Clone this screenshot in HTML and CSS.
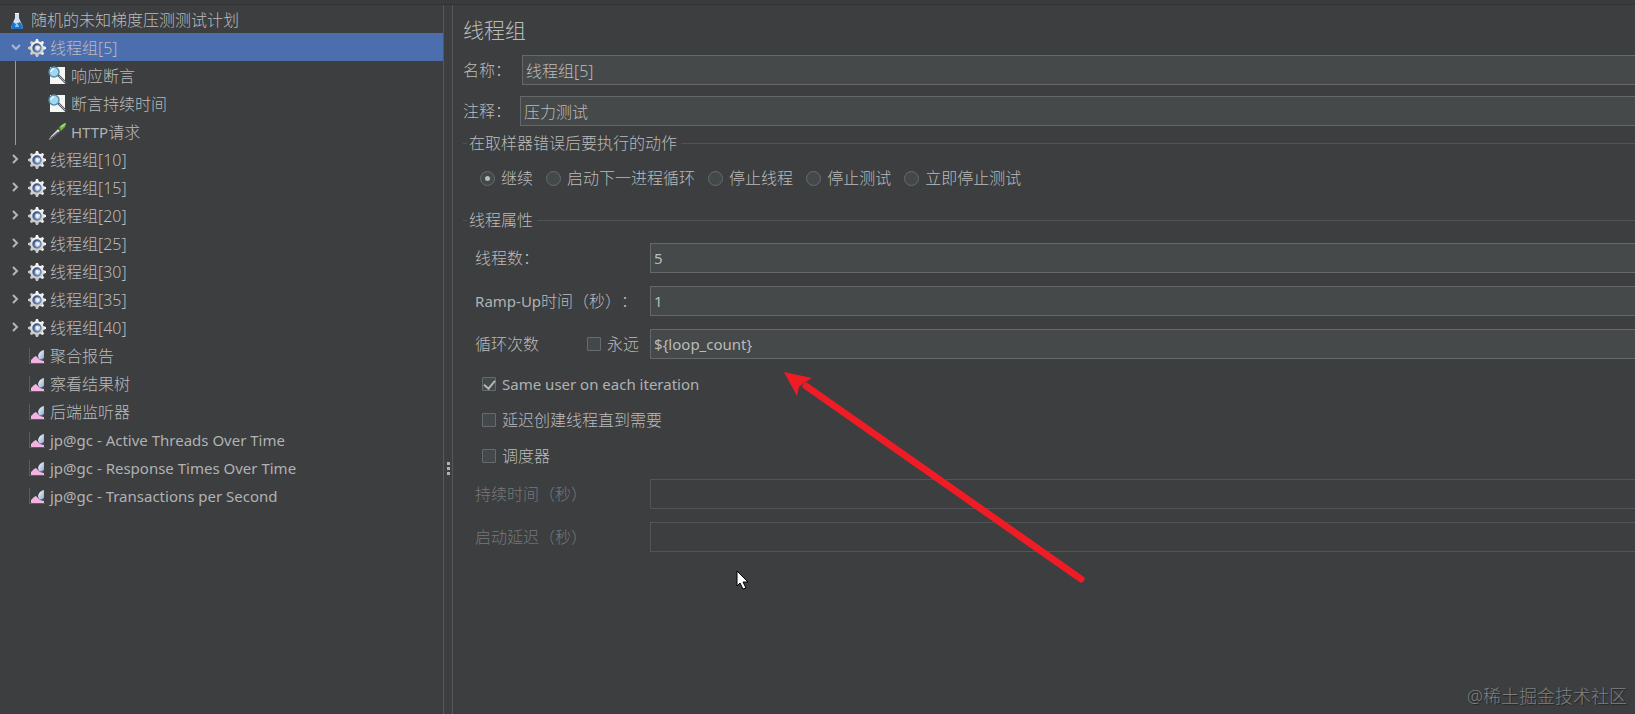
FILE: index.html
```
<!DOCTYPE html>
<html lang="zh-CN">
<head>
<meta charset="utf-8">
<title>线程组</title>
<link rel="stylesheet" href="styles.css">
</head>
<body>
<svg class="defs" aria-hidden="true">
  <defs>
    <linearGradient id="gearFill" x1="0" y1="0" x2="0" y2="1">
      <stop offset="0" stop-color="#f6f6f6"/><stop offset="1" stop-color="#c4c4c2"/>
    </linearGradient>
    <linearGradient id="hub" x1="0" y1="0" x2="1" y2="1">
      <stop offset="0" stop-color="#2c4170"/><stop offset="1" stop-color="#7fa0cc"/>
    </linearGradient>
    <linearGradient id="blob" x1="0" y1="0" x2="1" y2="1">
      <stop offset="0" stop-color="#ffffff"/><stop offset="1" stop-color="#86a4cf"/>
    </linearGradient>
    <symbol id="gear" viewBox="0 0 18 18">
      <g fill="url(#gearFill)">
        <path d="M7 3l1-3h2l1 3v12l-1 3H8l-1-3z"/>
        <path d="M7 3l1-3h2l1 3v12l-1 3H8l-1-3z" transform="rotate(45 9 9)"/>
        <path d="M7 3l1-3h2l1 3v12l-1 3H8l-1-3z" transform="rotate(90 9 9)"/>
        <path d="M7 3l1-3h2l1 3v12l-1 3H8l-1-3z" transform="rotate(135 9 9)"/>
        <circle cx="9" cy="9" r="6.800"/>
      </g>
      <circle cx="9" cy="9" r="4.700" fill="url(#hub)"/>
      <circle cx="9.500" cy="9" r="2.800" fill="#b9c8e4"/>
      <path d="M8 7l4 1-3 4z" fill="#f4f7fb"/>
    </symbol>
    <symbol id="lens" viewBox="0 0 19 19">
      <path d="M2 1h15v17H2z" fill="#f6f6f4"/>
      <path d="M10 9l8 8" stroke="#55585b" stroke-width="2.4"/>
      <path d="M11 10l6 6" stroke="#a9adb0" stroke-width="1"/>
      <circle cx="6" cy="6" r="5" fill="#a6d5ec" stroke="#4b8fb5" stroke-width="1.4"/>
      <path d="M3 6a3 3 0 0 1 3-3" stroke="#e8f7ff" stroke-width="1.4" fill="none"/>
    </symbol>
    <symbol id="pipette" viewBox="0 0 19 19">
      <path d="M1 18l2-4 8-8 2 2-9 8z" fill="#d9dcda" stroke="#74797a" stroke-width=".8"/>
      <path d="M3 16l7-6" stroke="#4c5254" stroke-width="1"/>
      <path d="M9 5l5 5" stroke="#34502a" stroke-width="1.600"/>
      <path d="M11 5l4-3q3-2 3-1t-1 4l-4 4z" fill="#6fae43"/>
      <path d="M13 5l4-3" stroke="#b9e08f" stroke-width="1.4"/>
    </symbol>
    <symbol id="chart" viewBox="0 0 16 16">
      <path d="M.5 0v15.500M0 15.500h16" stroke="#5c5d60" fill="none"/>
      <path d="M2 15v-3l3-3 2-1 3 3 5 2v2z" fill="#f3b2e2"/>
      <path d="M9 8q1-5 6-6v8q-3 3-5 1z" fill="url(#blob)"/>
      <path d="M10 11q3 2 5-1v3l-4-1z" fill="#4b4a78"/>
    </symbol>
    <symbol id="flask" viewBox="0 0 12 17">
      <path d="M4 1h4v5l4 9q0 2-2 2H2q-2 0-2-2l4-9z" fill="#d5e2ee"/>
      <path d="M2 10l3 2 4-2 3 5q0 2-2 2H2q-2 0-2-2z" fill="#1673cf"/>
      <path d="M5 12l-1 3h4l-1-3z" fill="#8dc4f5"/>
      <path d="M4 1h4v1H4z" fill="#fff"/>
    </symbol>
    <symbol id="closed" viewBox="0 0 10 10">
      <path d="M2 1l4 4-4 4" fill="none" stroke="#b4b6b8" stroke-width="2"/>
    </symbol>
    <symbol id="open" viewBox="0 0 10 10">
      <path d="M1 3l4 4 4-4" fill="none" stroke="#a9b7d4" stroke-width="2"/>
    </symbol>
  </defs>
</svg>

<div class="app">
  <nav class="tree" aria-label="测试计划">
    <ul class="tree-list">
      <li class="row row-root"><svg class="icon-flask"><use href="#flask"/></svg><span>随机的未知梯度压测测试计划</span></li>
      <li>
        <div class="row row-group selected"><svg class="arrow"><use href="#open"/></svg><svg class="icon-gear"><use href="#gear"/></svg><span>线程组[5]</span></div>
        <ul class="tree-list children">
          <li class="row"><svg class="icon-child"><use href="#lens"/></svg><span>响应断言</span></li>
          <li class="row"><svg class="icon-child"><use href="#lens"/></svg><span>断言持续时间</span></li>
          <li class="row"><svg class="icon-child"><use href="#pipette"/></svg><span><span class="latin">HTTP</span>请求</span></li>
        </ul>
      </li>
      <li class="row row-group"><svg class="arrow"><use href="#closed"/></svg><svg class="icon-gear"><use href="#gear"/></svg><span>线程组[10]</span></li>
      <li class="row row-group"><svg class="arrow"><use href="#closed"/></svg><svg class="icon-gear"><use href="#gear"/></svg><span>线程组[15]</span></li>
      <li class="row row-group"><svg class="arrow"><use href="#closed"/></svg><svg class="icon-gear"><use href="#gear"/></svg><span>线程组[20]</span></li>
      <li class="row row-group"><svg class="arrow"><use href="#closed"/></svg><svg class="icon-gear"><use href="#gear"/></svg><span>线程组[25]</span></li>
      <li class="row row-group"><svg class="arrow"><use href="#closed"/></svg><svg class="icon-gear"><use href="#gear"/></svg><span>线程组[30]</span></li>
      <li class="row row-group"><svg class="arrow"><use href="#closed"/></svg><svg class="icon-gear"><use href="#gear"/></svg><span>线程组[35]</span></li>
      <li class="row row-group"><svg class="arrow"><use href="#closed"/></svg><svg class="icon-gear"><use href="#gear"/></svg><span>线程组[40]</span></li>
      <li class="row row-report"><svg class="icon-chart"><use href="#chart"/></svg><span>聚合报告</span></li>
      <li class="row row-report"><svg class="icon-chart"><use href="#chart"/></svg><span>察看结果树</span></li>
      <li class="row row-report"><svg class="icon-chart"><use href="#chart"/></svg><span>后端监听器</span></li>
      <li class="row row-report"><svg class="icon-chart"><use href="#chart"/></svg><span class="latin">jp@gc - Active Threads Over Time</span></li>
      <li class="row row-report"><svg class="icon-chart"><use href="#chart"/></svg><span class="latin">jp@gc - Response Times Over Time</span></li>
      <li class="row row-report"><svg class="icon-chart"><use href="#chart"/></svg><span class="latin">jp@gc - Transactions per Second</span></li>
    </ul>
  </nav>

  <div class="splitter"><i></i><i></i><i></i></div>

  <main class="panel">
    <h1 class="title">线程组</h1>
    <div class="line"><label for="name">名称：</label><input class="field" id="name" type="text" value="线程组[5]"></div>
    <div class="line line-comment"><label for="comment">注释：</label><input class="field" id="comment" type="text" value="压力测试"></div>

    <fieldset class="group group-action">
      <legend>在取样器错误后要执行的动作</legend>
      <div class="radios">
        <label class="choice"><input type="radio" name="action" checked>继续</label>
        <label class="choice"><input type="radio" name="action">启动下一进程循环</label>
        <label class="choice"><input type="radio" name="action">停止线程</label>
        <label class="choice"><input type="radio" name="action">停止测试</label>
        <label class="choice"><input type="radio" name="action">立即停止测试</label>
      </div>
    </fieldset>

    <fieldset class="group group-props">
      <legend>线程属性</legend>
      <div class="props">
        <div class="prop"><label class="prop-name" for="threads">线程数：</label><input class="field latin" id="threads" type="text" value="5"></div>
        <div class="prop"><label class="prop-name" for="ramp"><span class="latin">Ramp-Up</span>时间（秒）：</label><input class="field latin" id="ramp" type="text" value="1"></div>
        <div class="prop"><div class="prop-name loop"><label for="loops">循环次数</label><label class="choice"><input type="checkbox">永远</label></div><input class="field latin" id="loops" type="text" value="${loop_count}"></div>
      </div>
      <div class="checks">
        <label class="choice latin"><input type="checkbox" checked>Same user on each iteration</label>
        <label class="choice"><input type="checkbox">延迟创建线程直到需要</label>
        <label class="choice"><input type="checkbox">调度器</label>
      </div>
      <div class="props">
        <div class="prop off"><label class="prop-name" for="duration">持续时间（秒）</label><input class="field" id="duration" type="text" disabled></div>
        <div class="prop off"><label class="prop-name" for="delay">启动延迟（秒）</label><input class="field" id="delay" type="text" disabled></div>
      </div>
    </fieldset>
  </main>
</div>

<svg class="pointer-arrow" viewBox="0 0 304 214" aria-hidden="true">
  <path d="M23 15L298 208" stroke="#ee1c25" stroke-width="7" stroke-linecap="round"/>
  <path d="M1 1l28 6-8 5-5 4-2 9z" fill="#ee1c25"/>
</svg>
<svg class="cursor" viewBox="0 0 13 20" aria-hidden="true">
  <path d="M1 1v15l3-3 3 6 3-1-3-6h5z" fill="#fff" stroke="#000"/>
</svg>
<div class="watermark">@稀土掘金技术社区</div>
</body>
</html>
```
FILE: styles.css
```
* {
  box-sizing: border-box;
}

body {
  margin: 0;
  height: 100vh;
  overflow: hidden;
  background: #3c3e40;
  color: #bbbbbb;
  font: 300 16px/20px "Noto Sans", "Noto Sans CJK SC", sans-serif;
  text-spacing-trim: space-all;
}

.defs {
  position: absolute;
  width: 0;
  height: 0;
}

.app {
  display: flex;
  height: 100%;
  padding-top: 5px;
  background: linear-gradient(#393b3d 4px, #303234 4px, #303234 5px, transparent 5px);
}

.latin {
  font-size: 15px;
  font-weight: 400;
  color: #b0b2b3;
}

/* Test plan tree */

.tree {
  flex: 0 0 27.1%;
}

.tree-list {
  margin: 0;
  padding: 0;
  list-style: none;
}

.row {
  display: flex;
  align-items: center;
  height: 28px;
  padding-top: 2px;
  white-space: nowrap;
}

.row-root {
  gap: 8px;
  padding-left: 11px;
}

.row-group {
  gap: 4px;
  padding-left: 11px;
}

.row-report {
  gap: 5px;
  padding-left: 29px;
}

.selected {
  background: #4b6eaf;
}

.children {
  margin-left: 15px;
  border-left: 1px solid #7d9fd3;
}

.children .row {
  gap: 4px;
  padding-left: 32px;
}

.icon-flask {
  width: 12px;
  height: 17px;
}

.arrow {
  width: 10px;
  height: 10px;
  margin: 0 3px 2px 0;
}

.icon-gear {
  width: 18px;
  height: 18px;
}

.icon-child {
  width: 19px;
  height: 19px;
  margin-bottom: 2px;
}

.icon-chart {
  width: 16px;
  height: 16px;
}

/* Divider between tree and panel */

.splitter {
  display: flex;
  flex: 0 0 10px;
  flex-direction: column;
  align-items: center;
  justify-content: center;
  gap: 2px;
  padding-top: 218px;
  border: solid #55575a;
  border-width: 0 1px;
}

.splitter i {
  width: 3px;
  height: 3px;
  background: #b0b2b4;
}

/* Element editor */

.panel {
  flex: 1;
  min-width: 0;
  padding: 10px 0 0 10px;
}

.title {
  margin: 0;
  font-size: 21px;
  font-weight: 300;
  line-height: 30px;
}

.line {
  display: flex;
  align-items: center;
  gap: 11px;
  margin-top: 10px;
}

.line-comment {
  gap: 9px;
  margin-top: 11px;
}

.field {
  flex: 1;
  min-width: 0;
  height: 30px;
  padding: 0 3px;
  border: 1px solid #646869;
  border-right: 0;
  border-radius: 0;
  outline: 0;
  background: #45494a;
  color: #bbbbbb;
  font-family: inherit;
  font-size: 16px;
  font-weight: 300;
}

.field.latin {
  font-size: 15px;
  font-weight: 400;
}

.field:disabled {
  border-color: #525557;
  background: transparent;
}

.group {
  min-width: 0;
  margin: 0;
  padding: 0;
  border: 0 solid #515355;
  border-top-width: 1px;
}

.group legend {
  margin-left: 4px;
  padding: 0 4px 0 2px;
}

.group-action {
  margin-top: 7px;
}

.radios {
  display: flex;
  gap: 13px;
  padding: 15px 0 0 17px;
}

.choice {
  display: flex;
  align-items: center;
  gap: 6px;
  white-space: nowrap;
}

.choice input {
  display: grid;
  place-items: center;
  width: 15px;
  height: 15px;
  margin: 0;
  appearance: none;
  border: 1px solid #676b6d;
  background: #43494a;
}

.choice input[type="radio"] {
  border-radius: 50%;
}

.choice input[type="radio"]:checked::after {
  width: 5px;
  height: 5px;
  border-radius: 50%;
  background: #b8babb;
  content: "";
}

.choice input[type="checkbox"] {
  width: 14px;
  height: 14px;
  border-radius: 1px;
}

.choice input[type="checkbox"]:checked::after {
  width: 5px;
  height: 9px;
  margin-bottom: 2px;
  border: solid #b4b6b7;
  border-width: 0 2px 2px 0;
  transform: rotate(40deg);
  content: "";
}

.group-props {
  margin-top: 22px;
}

.props {
  display: grid;
  gap: 13px;
  padding: 13px 0 0 12px;
}

.prop {
  display: flex;
  align-items: center;
}

.prop-name {
  flex: 0 0 175px;
}

.loop {
  display: flex;
  justify-content: space-between;
  padding-right: 11px;
}

.off {
  color: #76787a;
}

.checks {
  display: grid;
  gap: 16px;
  padding: 15px 0 0 19px;
}

/* Overlays */

.pointer-arrow {
  position: absolute;
  top: 371px;
  left: 783px;
  width: 304px;
  height: 214px;
}

.cursor {
  position: absolute;
  top: 570px;
  left: 736px;
  width: 13px;
  height: 20px;
}

.watermark {
  position: absolute;
  right: 8px;
  bottom: 6px;
  color: #7e8081;
  font-size: 18px;
  line-height: 24px;
  text-shadow: 1px 1px 1px #222425;
}
```
